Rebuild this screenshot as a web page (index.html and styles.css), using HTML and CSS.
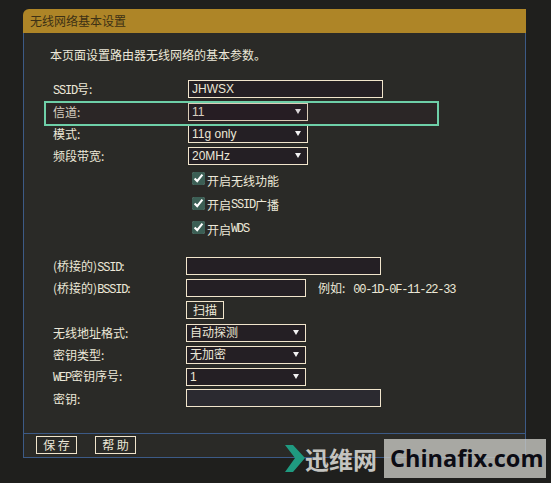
FILE: index.html
```html
<!DOCTYPE html>
<html lang="zh-CN">
<head>
    <meta charset="UTF-8">
    <title>无线网络基本设置</title>
    <link rel="stylesheet" href="styles.css">
</head>
<body>

    <div class="panel">
        <div class="panel-title">无线网络基本设置</div>

        <div class="panel-main">
            <p class="intro">本页面设置路由器无线网络的基本参数。</p>

            <div class="rows">
                <div class="row">
                    <span class="label"><span class="mono">SSID</span>号:</span>
                    <input class="field wide" type="text" value="JHWSX">
                </div>
                <div class="row">
                    <span class="label">信道:</span>
                    <div class="select"><select><option>11</option></select></div>
                </div>
                <div class="row">
                    <span class="label">模式:</span>
                    <div class="select"><select><option>11g only</option></select></div>
                </div>
                <div class="row">
                    <span class="label">频段带宽:</span>
                    <div class="select"><select><option>20MHz</option></select></div>
                </div>
            </div>

            <div class="checks">
                <label class="check"><input type="checkbox" checked>开启无线功能</label>
                <label class="check"><input type="checkbox" checked>开启<span class="mono">SSID</span>广播</label>
                <label class="check"><input type="checkbox" checked>开启<span class="mono">WDS</span></label>
            </div>

            <div class="rows rows-lower">
                <div class="row">
                    <span class="label">(桥接的)<span class="mono">SSID</span>:</span>
                    <input class="field wide" type="text">
                </div>
                <div class="row">
                    <span class="label">(桥接的)<span class="mono">BSSID</span>:</span>
                    <input class="field" type="text">
                    <span class="hint">例如:<span class="mono hint-mac">00-1D-0F-11-22-33</span></span>
                </div>
                <div class="row">
                    <span class="label"></span>
                    <button class="btn btn-scan" type="button">扫描</button>
                </div>
                <div class="row">
                    <span class="label">无线地址格式:</span>
                    <div class="select"><select><option>自动探测</option></select></div>
                </div>
                <div class="row">
                    <span class="label">密钥类型:</span>
                    <div class="select"><select><option>无加密</option></select></div>
                </div>
                <div class="row">
                    <span class="label"><span class="mono">WEP</span>密钥序号:</span>
                    <div class="select"><select><option>1</option></select></div>
                </div>
                <div class="row">
                    <span class="label">密钥:</span>
                    <input class="field wide field-off" type="text">
                </div>
            </div>
        </div>

        <div class="panel-foot">
            <button class="btn" type="button">保 存</button>
            <button class="btn" type="button">帮 助</button>
        </div>
    </div>

    <!-- annotation drawn on top of the screenshot -->
    <div class="highlight"></div>

    <div class="watermark">
        <svg class="chevron" width="20" height="28" viewBox="0 0 20 28">
            <polygon points="0,0 8,0 20,13 8,27 0,27 10,13" fill="#1f9a80"/>
        </svg>
        <span class="wm-cn">迅维网</span>
        <span class="wm-box">Chinafix.com</span>
    </div>

</body>
</html>
```

FILE: styles.css
```css
body {
    margin: 0;
    height: 483px;
    overflow: hidden;
    background: #1f1f1d;
    color: #ece8d8;
    font-family: "Noto Sans CJK SC", sans-serif;
    font-size: 12px;
}

.panel {
    width: 503px;
    margin: 9px 0 0 23px;
}

.panel-title {
    height: 24px;
    line-height: 24px;
    padding-left: 7px;
    background: #ae8527;
    color: #3d3115;
    border-top-left-radius: 6px;
}

.panel-main {
    height: 400px;
    box-sizing: border-box;
    padding: 13px 0 0 29px;
    background: #2a2a27;
    border-left: 1px solid #3c5a86;
    border-right: 1px solid #3c5a86;
}

.panel-foot {
    height: 25px;
    box-sizing: border-box;
    display: flex;
    gap: 18px;
    padding: 2px 0 0 12px;
    background: #2a2a27;
    border: 1px solid #3c5a86;
}

.intro {
    margin: 0 0 0 -3px;
    height: 18px;
    line-height: 18px;
}

.mono {
    font-family: "Liberation Mono", monospace;
    font-size: 12px;
    letter-spacing: -1.2px;
}

.rows {
    display: flex;
    flex-direction: column;
    gap: 4px;
    margin-top: 16px;
}

.row {
    display: flex;
    align-items: center;
    height: 18px;
}

.label {
    width: 135px;
    flex: none;
}

.rows-lower {
    margin-top: 0;
}

.rows-lower .label {
    width: 133px;
}

.field,
.select select {
    box-sizing: border-box;
    height: 18px;
    margin: 0;
    padding: 0 3px;
    background: #241f24;
    border: 1px solid #f1e5cc;
    border-radius: 0;
    color: #ece8d8;
    font-family: "Liberation Sans", "Noto Sans CJK SC", sans-serif;
    font-size: 12px;
    outline: none;
}

.field {
    width: 120px;
}

.wide {
    width: 195px;
}

.field-off {
    background: #2b2a30;
}

.select {
    position: relative;
    width: 120px;
    height: 18px;
}

.select select {
    width: 100%;
    appearance: none;
}

.select::after {
    content: "";
    position: absolute;
    top: 7px;
    right: 7px;
    border-left: 3px solid transparent;
    border-right: 3px solid transparent;
    border-top: 5px solid #f2f2f2;
}

.checks {
    display: flex;
    flex-direction: column;
    height: 89px;
    margin: 4px 0 0 139px;
}

.check {
    display: flex;
    align-items: center;
    height: 24.5px;
}

.check input {
    width: 13px;
    height: 13px;
    margin: -3px 2px 0 0;
    accent-color: #3c5f55;
}

.hint {
    margin-left: 12px;
}

.hint-mac {
    margin-left: 8px;
}

.btn {
    box-sizing: border-box;
    width: 41px;
    height: 18px;
    margin: 0;
    padding: 0;
    background: #2a2a27;
    border: 1px solid #f1e5cc;
    border-radius: 0;
    color: #ece8d8;
    font-family: "Noto Sans CJK SC", sans-serif;
    font-size: 12px;
    line-height: 16px;
}

.btn-scan {
    width: 38px;
}

.highlight {
    position: absolute;
    left: 44px;
    top: 101px;
    width: 391px;
    height: 21px;
    border: 2px solid #6ecfa8;
    background: rgba(60, 20, 30, 0.12);
}

.watermark {
    position: absolute;
    left: 285px;
    top: 439px;
    display: flex;
    align-items: center;
    height: 39px;
}

.chevron {
    flex: none;
}

.wm-cn {
    width: 79px;
    color: #c4c4c0;
    font-size: 24px;
    font-weight: 700;
    white-space: nowrap;
}

.wm-box {
    width: 162px;
    height: 39px;
    box-sizing: border-box;
    padding-left: 6px;
    background: rgba(200, 200, 195, 0.8);
    color: #0c0c14;
    font-family: "Open Sans", sans-serif;
    font-size: 23.5px;
    font-weight: 700;
    line-height: 39px;
    white-space: nowrap;
}
```
